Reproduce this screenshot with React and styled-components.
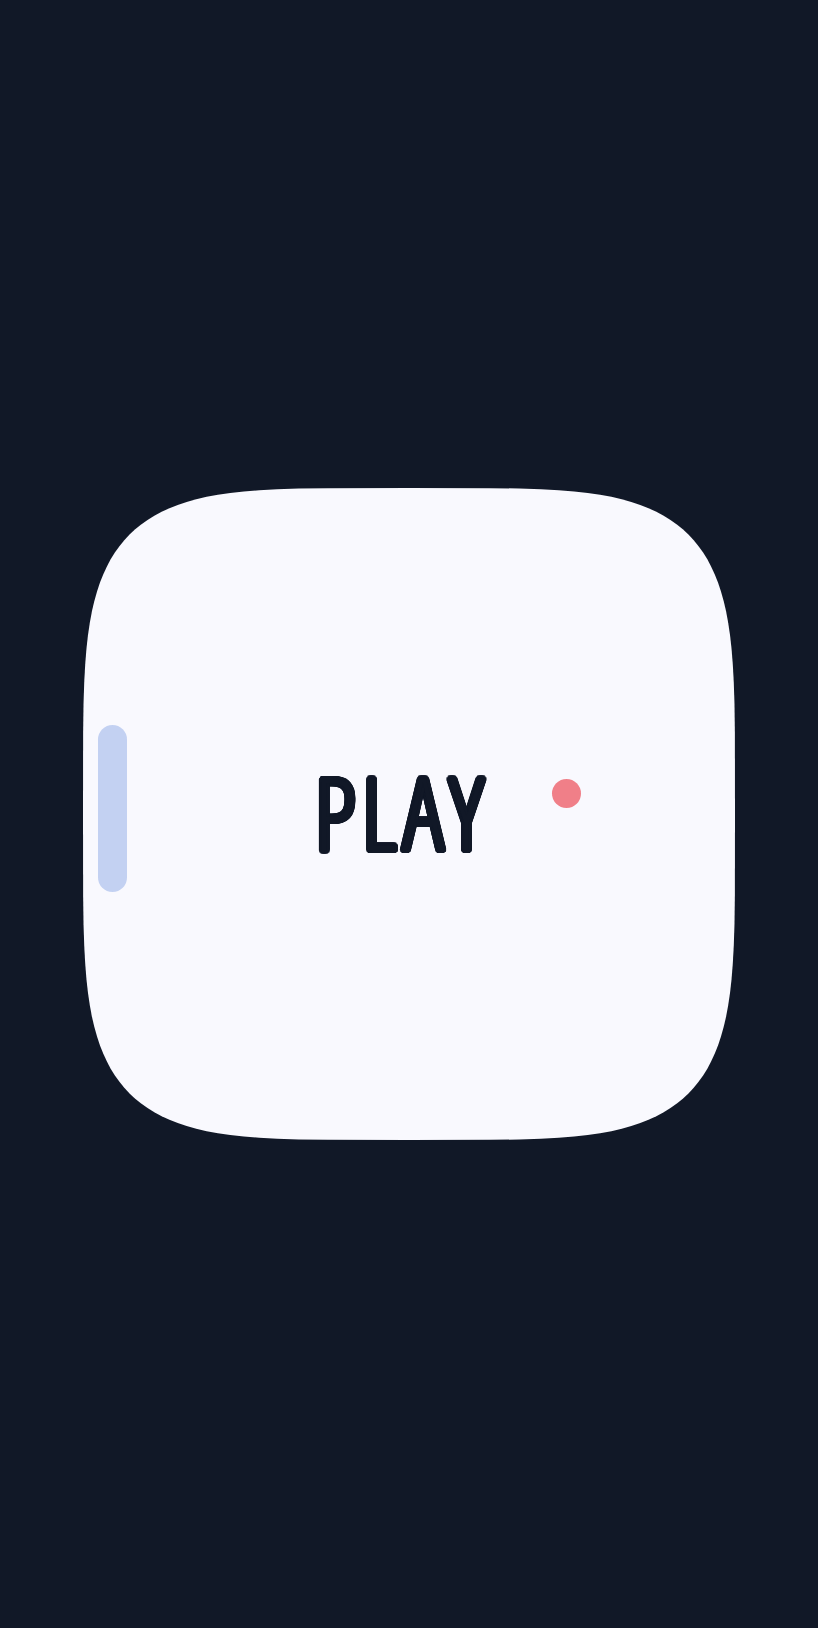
import React from 'react';
import styled, { createGlobalStyle } from 'styled-components';

const GlobalStyle = createGlobalStyle`
  html, body {
    margin: 0;
    padding: 0;
    background: #111827;
  }
  #root {
    min-height: 100vh;
  }
`;

// superellipse outline for the card (n ~ 4.5)
const squircle = (() => {
  const n = 4.5;
  const pts = [];
  for (let i = 0; i < 144; i++) {
    const t = (i / 144) * Math.PI * 2;
    const c = Math.cos(t);
    const s = Math.sin(t);
    const x = Math.sign(c) * Math.pow(Math.abs(c), 2 / n);
    const y = Math.sign(s) * Math.pow(Math.abs(s), 2 / n);
    pts.push(`${(50 + x * 50).toFixed(2)}% ${(50 + y * 50).toFixed(2)}%`);
  }
  return `polygon(${pts.join(', ')})`;
})();

// round outline around thin letters
const ring = (r, color) => {
  const out = [];
  for (let i = 0; i < 24; i++) {
    const a = (i / 24) * Math.PI * 2;
    out.push(`${(Math.cos(a) * r).toFixed(2)}px ${(Math.sin(a) * r).toFixed(2)}px 0 ${color}`);
  }
  return out.join(', ');
};

const Screen = styled.main`
  min-height: 100vh;
  display: flex;
  align-items: center;
  justify-content: center;
`;

const Card = styled.button`
  position: relative;
  width: 652px;
  height: 652px;
  border: 0;
  padding: 0;
  background: #f9f9fe;
  clip-path: ${squircle};
  display: flex;
  align-items: center;
  justify-content: center;
  cursor: pointer;
`;

const Paddle = styled.span`
  position: absolute;
  left: 15px;
  top: 237px;
  width: 29px;
  height: 167px;
  border-radius: 15px;
  background: #c3d1f2;
`;

const Ball = styled.span`
  position: absolute;
  left: 469px;
  top: 291px;
  width: 29px;
  height: 29px;
  border-radius: 50%;
  background: #f07f88;
`;

const Label = styled.span`
  display: inline-block;
  font-family: "Open Sans", sans-serif;
  font-stretch: 75%;
  font-weight: 300;
  font-size: 100px;
  font-kerning: none;
  line-height: 1;
  letter-spacing: 6px;
  color: #111827;
  text-shadow: ${ring(3, '#111827')};
  margin: -7px 0 0 -14px;
`;

export default function App() {
  return (
    <>
      <GlobalStyle />
      <Screen>
        <Card type="button">
          <Paddle />
          <Label>PLAY</Label>
          <Ball />
        </Card>
      </Screen>
    </>
  );
}
